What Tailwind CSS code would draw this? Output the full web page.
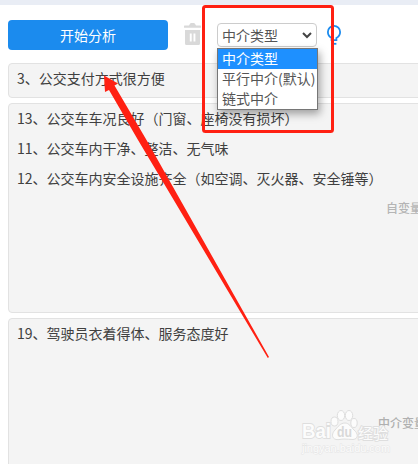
<!DOCTYPE html>
<html lang="zh-CN">
  <head>
    <meta charset="UTF-8" />
    <meta name="viewport" content="width=device-width, initial-scale=1.0" />
    <script src="https://cdn.jsdelivr.net/npm/@tailwindcss/browser@4"></script>
    <title>中介作用</title>
  </head>
  <body class="bg-white">
    <div class="relative flex h-[464px] w-[418px] flex-col overflow-hidden font-['Noto_Sans_CJK_SC',sans-serif] text-sm text-[#404040]">
      <div class="h-[5px] shrink-0 bg-[#e9edf5]"></div>

      <!-- toolbar -->
      <div class="flex h-[58px] shrink-0 items-start pt-[15px] pl-2">
        <button class="h-[30px] w-[160px] rounded bg-[#1b8bee] text-white">开始分析</button>
        <svg class="mt-[3px] ml-4 h-[22px] w-[17px]" viewBox="0 0 17 22" fill="#d9d9d9">
          <path d="M0.500 2.500h4.500L6 0.800Q6.400 0 7.200 0h2.600Q10.600 0 11 0.800l1 1.700h4.500Q17 2.500 17 3V4.800H0V3Q0 2.500 0.500 2.500Z" />
          <path fill-rule="evenodd" d="M1 7h15v13.500Q16 22 14.500 22H2.500Q1 22 1 20.500ZM5.800 10.500v8h1.900v-8ZM9.500 10.500v8h1.900v-8Z" />
        </svg>
        <div class="relative mt-[3px] ml-4">
          <div class="flex h-6 w-[100px] items-center justify-between rounded border border-[#ccc] pr-[4px] pl-1 text-[#555]">
            <span>中介类型</span>
            <svg class="h-[7px] w-[10px]" viewBox="0 0 10 7" fill="none" stroke="#444" stroke-width="2">
              <path d="M1 1l4 4 4-4" />
            </svg>
          </div>
          <ul class="absolute top-[25px] left-0 z-10 w-[101px] border border-[#767676] bg-white whitespace-nowrap text-[#555] shadow-[2px_4px_8px_rgba(0,0,0,0.35)]">
            <li class="h-5 bg-[#1e90ff] pl-1 leading-[18px] text-white">中介类型</li>
            <li class="h-5 pl-1 leading-[18px]">平行中介(默认)</li>
            <li class="h-5 pl-1 leading-[18px]">链式中介</li>
          </ul>
        </div>
        <svg class="mt-[5px] ml-[10px] h-[20px] w-[14px]" viewBox="0 0 14 20" fill="none" stroke="#1b8bee" stroke-width="1.8">
          <path d="M4.600 15.200V13C2.300 11.800 0.900 9.600 0.900 7a6.100 6.100 0 0 1 12.200 0C13.100 9.600 11.700 11.800 9.400 13V15.200Z" />
          <path d="M4.600 18.800h4.800" />
        </svg>
      </div>

      <!-- variable boxes -->
      <div class="ml-2 flex w-[420px] flex-col gap-[5px]">
        <div class="h-[35px] rounded-sm border border-[#e2e2e2] bg-[#f4f4f4] pl-2 leading-[29px]">3、公交支付方式很方便</div>
        <div class="h-[210px] rounded-sm border border-[#e2e2e2] bg-[#f4f4f4] pl-2 leading-[30px]">
          <p class="-mt-px">13、公交车车况良好（门窗、座椅没有损坏）</p>
          <p>11、公交车内干净、整洁、无气味</p>
          <p>12、公交车内安全设施齐全（如空调、灭火器、安全锤等）</p>
          <p class="pl-[369px] text-xs leading-[30px] font-medium whitespace-nowrap text-[#b5b5b5]">自变量</p>
        </div>
        <div class="h-[160px] rounded-sm border border-[#e2e2e2] bg-[#f4f4f4] pl-2 leading-[30px]">
          <p class="-mt-px">19、驾驶员衣着得体、服务态度好</p>
          <p class="mt-[60px] pl-[361px] text-xs leading-[30px] font-medium whitespace-nowrap text-[#b0b0b0]">中介变量</p>
        </div>
      </div>

      <!-- watermark -->
      <svg class="absolute top-[406px] left-[298px]" width="96" height="50" viewBox="0 0 96 50" fill="#fcfcfc" stroke="#dedede" stroke-width="1" font-family="Liberation Sans, Noto Sans CJK SC, sans-serif">
        <ellipse cx="36.500" cy="15.500" rx="3.500" ry="4.500" />
        <ellipse cx="43" cy="9.500" rx="3.700" ry="5" />
        <ellipse cx="51" cy="9.500" rx="3.700" ry="5" />
        <ellipse cx="56" cy="17" rx="3.200" ry="4.500" />
        <path d="M47 17C51 17 53 21 56 24C60 27 61 33 55 33.500C52 33.500 49 33 46 33C43 33 41 34 38 33.500C33 32 34 27 37 24C40 21 42 17 47 17Z" />
        <g font-weight="bold" paint-order="stroke" stroke-width="1.8">
          <text x="4" y="32" font-size="20" textLength="29" lengthAdjust="spacingAndGlyphs">Bai</text>
          <text x="39" y="31" font-size="14" textLength="15" lengthAdjust="spacingAndGlyphs" fill="#d8d8d8" stroke="none">du</text>
          <text x="60" y="33" font-size="15" textLength="30" font-weight="normal">经验</text>
        </g>
        <text x="4" y="46" font-size="10.500" textLength="88" lengthAdjust="spacingAndGlyphs" paint-order="stroke" stroke="#e5e5e5">jingyan.baidu.com</text>
      </svg>

      <!-- highlight frame and pointer -->
      <svg class="absolute top-0 left-0 z-20" width="418" height="464" viewBox="0 0 418 464">
        <rect x="203.500" y="6.500" width="129" height="125" rx="2" fill="none" stroke="#ff2012" stroke-width="3" />
        <path d="M104 75.500L118 83.500L114.500 85.500L146.500 140L269 357L267.800 358L138 140L109 90L105 92Z" fill="#ff2012" />
      </svg>
    </div>
  </body>
</html>
